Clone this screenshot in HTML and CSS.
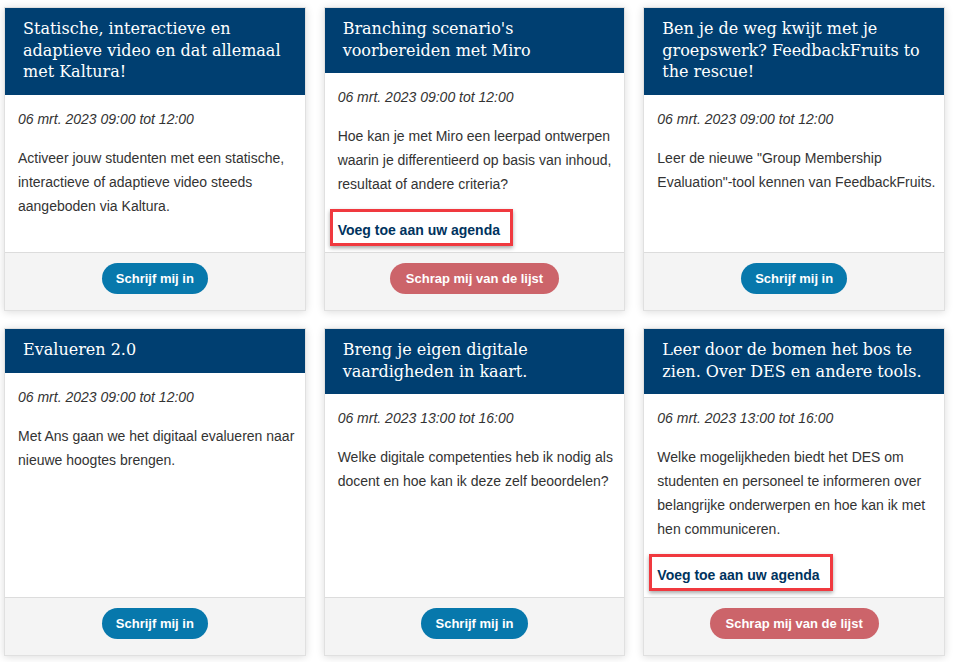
FILE: index.html
```html
<!DOCTYPE html>
<html lang="nl">
<head>
  <meta charset="UTF-8" />
  <meta name="viewport" content="width=device-width, initial-scale=1.0"/>
  <title>Sessies</title>
  <link rel="stylesheet" href="styles.css">
</head>
<body>
  <div class="grid">
    <div class="card">
      <h3 class="card-title">Statische, interactieve en adaptieve video en dat allemaal met Kaltura!</h3>
      <div class="card-body">
        <p class="date">06 mrt. 2023 09:00 tot 12:00</p>
        <p class="desc">Activeer jouw studenten met een statische, interactieve of adaptieve video steeds aangeboden via Kaltura.</p>
      </div>
      <div class="card-foot"><button class="btn">Schrijf mij in</button></div>
    </div>

    <div class="card">
      <h3 class="card-title">Branching scenario's voorbereiden met Miro</h3>
      <div class="card-body">
        <p class="date">06 mrt. 2023 09:00 tot 12:00</p>
        <p class="desc">Hoe kan je met Miro een leerpad ontwerpen waarin je differentieerd op basis van inhoud, resultaat of andere criteria?</p>
        <a class="agenda" href="#">Voeg toe aan uw agenda</a>
      </div>
      <div class="card-foot"><button class="btn btn-remove">Schrap mij van de lijst</button></div>
    </div>

    <div class="card">
      <h3 class="card-title">Ben je de weg kwijt met je groepswerk? FeedbackFruits to the rescue!</h3>
      <div class="card-body">
        <p class="date">06 mrt. 2023 09:00 tot 12:00</p>
        <p class="desc">Leer de nieuwe "Group Membership Evaluation"-tool kennen van FeedbackFruits.</p>
      </div>
      <div class="card-foot"><button class="btn">Schrijf mij in</button></div>
    </div>

    <div class="card">
      <h3 class="card-title">Evalueren 2.0</h3>
      <div class="card-body">
        <p class="date">06 mrt. 2023 09:00 tot 12:00</p>
        <p class="desc">Met Ans gaan we het digitaal evalueren naar nieuwe hoogtes brengen.</p>
      </div>
      <div class="card-foot"><button class="btn">Schrijf mij in</button></div>
    </div>

    <div class="card">
      <h3 class="card-title">Breng je eigen digitale vaardigheden in kaart.</h3>
      <div class="card-body">
        <p class="date">06 mrt. 2023 13:00 tot 16:00</p>
        <p class="desc">Welke digitale competenties heb ik nodig als docent en hoe kan ik deze zelf beoordelen?</p>
      </div>
      <div class="card-foot"><button class="btn">Schrijf mij in</button></div>
    </div>

    <div class="card">
      <h3 class="card-title">Leer door de bomen het bos te zien. Over DES en andere tools.</h3>
      <div class="card-body">
        <p class="date">06 mrt. 2023 13:00 tot 16:00</p>
        <p class="desc">Welke mogelijkheden biedt het DES om studenten en personeel te informeren over belangrijke onderwerpen en hoe kan ik met hen communiceren.</p>
        <a class="agenda" href="#">Voeg toe aan uw agenda</a>
      </div>
      <div class="card-foot"><button class="btn btn-remove">Schrap mij van de lijst</button></div>
    </div>
  </div>
</body>
</html>
```

FILE: styles.css
```css
body { margin: 0; background: #fff; font-family: "Liberation Sans", Arial, sans-serif; color: #333; }
.grid { display: grid; grid-template-columns: repeat(3, 1fr); column-gap: 18px; row-gap: 17px; padding: 7px 8px 7px 4px; }
.card { display: flex; flex-direction: column; border: 1px solid #e0e0e0; background: #fff; box-shadow: 0 1px 8px rgba(0, 0, 0, 0.14); }
.card-title { margin: 0; padding: 10px 14px 12px 18px; background: #003f71; color: #fff; font-family: "DejaVu Serif", "Liberation Serif", serif; font-weight: normal; font-size: 16px; line-height: 21.5px; }
.card-body { flex: 1; padding: 12px 2px 10px 13px; font-size: 14px; line-height: 24px; }
.card-body p { margin: 0; }
.date { font-style: italic; margin-bottom: 15px !important; }
.desc { margin-bottom: 22px !important; }
.agenda { position: relative; display: inline-block; color: #00335e; font-weight: bold; text-decoration: none; }
.agenda::after { content: ""; position: absolute; left: -8px; right: -13px; top: -9px; bottom: -4px; border: 3px solid #f0393f; box-shadow: 0 2px 4px rgba(0, 0, 0, 0.35); }
.card-foot { border-top: 1px solid #dcdcdc; background: #f4f4f4; padding: 10px 0 16px; text-align: center; }
.btn { height: 31px; padding: 0 14px; border: 0; border-radius: 16px; background: #0778ac; color: #fff; font-family: "Liberation Sans", Arial, sans-serif; font-size: 13px; font-weight: bold; cursor: pointer; }
.btn-remove { padding: 0 16px; background: #cc646a; }
```
